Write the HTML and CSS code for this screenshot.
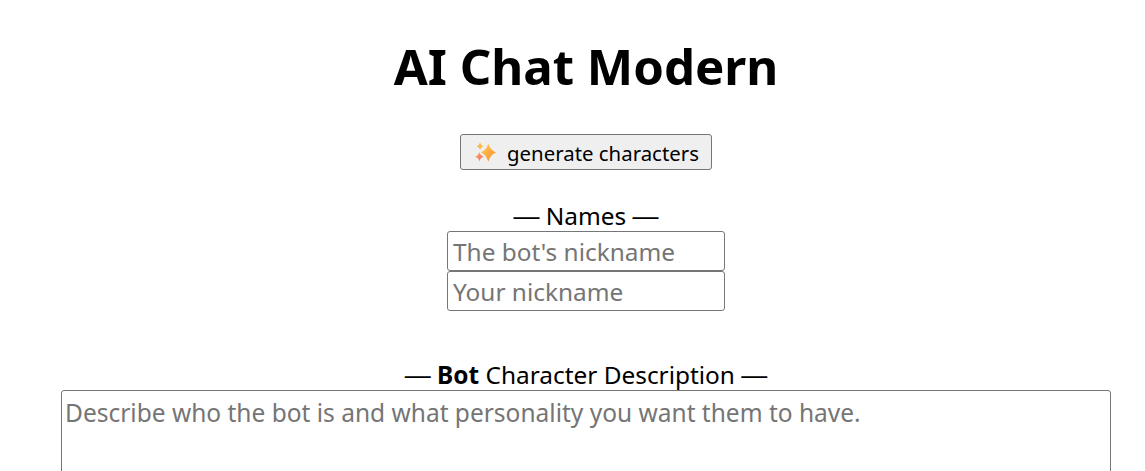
FILE: index.html
```html
<!DOCTYPE html>
<html lang="en">
<head>
<meta charset="utf-8">
<title>AI Chat Modern</title>
<link rel="stylesheet" href="styles.css">
</head>
<body>
<main class="page">
  <h1 class="title">AI Chat Modern</h1>
  <div class="actions">
    <button class="generate" type="button">
      <svg class="sparkle" viewBox="0 0 24 24" width="22" height="22" aria-hidden="true">
        <defs>
          <linearGradient id="spark" x1="0" y1="0" x2="1" y2="1">
            <stop offset="0" stop-color="#ffd04f"/>
            <stop offset="1" stop-color="#fb8a32"/>
          </linearGradient>
          <linearGradient id="sparkSmall" x1="0" y1="0" x2="1" y2="1">
            <stop offset="0" stop-color="#fba65c"/>
            <stop offset="1" stop-color="#f56c60"/>
          </linearGradient>
        </defs>
        <path fill="url(#spark)" d="M14.5 2 Q16.8 9.2 23 11.5 Q16.8 13.8 14.5 21.5 Q12.2 13.8 6.5 11.5 Q12.2 9.2 14.5 2Z"/>
        <path fill="#fbb844" d="M5.5 .5 Q6.3 3.8 9.2 4.6 Q6.3 5.4 5.5 8.5 Q4.7 5.4 1.8 4.6 Q4.7 3.8 5.5 .5Z"/>
        <path fill="url(#sparkSmall)" d="M4.8 11 Q5.8 15 9.4 16 Q5.8 17 4.8 21 Q3.8 17 .2 16 Q3.8 15 4.8 11Z"/>
      </svg>
      <span>generate characters</span>
    </button>
  </div>
  <section class="names">
    <div class="label"><span class="dash">—</span> Names <span class="dash">—</span></div>
    <input class="field" type="text" placeholder="The bot's nickname">
    <input class="field" type="text" placeholder="Your nickname">
  </section>
  <section class="description">
    <div class="label"><span class="dash">—</span> <b>Bot</b> Character Description <span class="dash">—</span></div>
    <textarea class="area" placeholder="Describe who the bot is and what personality you want them to have."></textarea>
  </section>
</main>
</body>
</html>
```
FILE: styles.css
```css
html, body {
  margin: 0;
  padding: 0;
  background: #fff;
}
body {
  height: 471px;
  overflow: hidden;
  font-family: "Noto Sans", "Open Sans", sans-serif;
  color: #000;
}
.page {
  width: 1050px;
  margin-left: 61px;
  display: flex;
  flex-direction: column;
  align-items: center;
  text-align: center;
}
.title {
  margin: 32px 0 0;
  font-size: 49.2px;
  line-height: 68px;
  font-weight: 700;
}
.actions {
  margin-top: 34px;
}
.generate {
  box-sizing: border-box;
  display: flex;
  align-items: center;
  gap: 10px;
  height: 36px;
  padding: 2px 12px 0 14px;
  background: #efefef;
  border: 1px solid #767676;
  border-radius: 3px;
  font: 20.4px/26px "Noto Sans", sans-serif;
  color: #000;
}
.sparkle {
  flex: none;
}
.names {
  margin-top: 31px;
  display: flex;
  flex-direction: column;
  align-items: center;
}
.label {
  font-size: 24.4px;
  line-height: 30px;
}
.dash {
  font-family: "Liberation Sans", sans-serif;
  font-size: 26px;
}
.field {
  box-sizing: border-box;
  display: block;
  width: 278px;
  height: 40px;
  padding: 1px 5px;
  border: 1px solid #767676;
  border-radius: 3px;
  font: 24.4px "Noto Sans", sans-serif;
  background: #fff;
}
.field::placeholder, .area::placeholder {
  color: #757575;
  opacity: 1;
}
.description {
  margin-top: 49px;
  width: 100%;
}
.area {
  box-sizing: border-box;
  display: block;
  width: 1050px;
  height: 200px;
  padding: 6px 3px 2px;
  border: 1px solid #767676;
  border-radius: 3px;
  font: 24.5px/32px "Noto Sans", sans-serif;
  resize: none;
}
```
